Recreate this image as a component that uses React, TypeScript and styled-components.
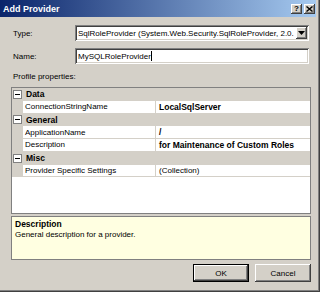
import styled, { createGlobalStyle } from 'styled-components';

const GlobalStyle = createGlobalStyle`
  html, body {
    margin: 0;
    padding: 0;
    background: #d4d0c8;
  }
  body {
    font-family: 'Liberation Sans', Arial, sans-serif;
    font-size: 8px;
    color: #000;
  }
`;

type GridRow =
  | { kind: 'category'; name: string }
  | { kind: 'prop'; name: string; value: string; bold?: boolean };

const rows: GridRow[] = [
  { kind: 'category', name: 'Data' },
  { kind: 'prop', name: 'ConnectionStringName', value: 'LocalSqlServer', bold: true },
  { kind: 'category', name: 'General' },
  { kind: 'prop', name: 'ApplicationName', value: '/', bold: true },
  { kind: 'prop', name: 'Description', value: 'for Maintenance of Custom Roles', bold: true },
  { kind: 'category', name: 'Misc' },
  { kind: 'prop', name: 'Provider Specific Settings', value: '(Collection)' },
];

export default function App(): JSX.Element {
  return (
    <>
      <GlobalStyle />
      <Window>
        <TitleBar>
          <TitleText>Add Provider</TitleText>
          <CaptionButtons>
            <CaptionButton>?</CaptionButton>
            <CaptionButton>
              <svg width="7" height="6" viewBox="0 0 7 6">
                <path d="M0.5 0.5 L6.5 5.5 M6.5 0.5 L0.5 5.5" stroke="#000" strokeWidth="1.4" />
              </svg>
            </CaptionButton>
          </CaptionButtons>
        </TitleBar>

        <Body>
          <Form>
            <Label>Type:</Label>
            <Sunken>
              <FieldText>SqlRoleProvider (System.Web.Security.SqlRoleProvider, 2.0.</FieldText>
              <DropButton>
                <svg width="7" height="4" viewBox="0 0 7 4">
                  <path d="M0 0 H7 L3.5 4 Z" fill="#000" />
                </svg>
              </DropButton>
            </Sunken>
            <Label>Name:</Label>
            <Sunken>
              <FieldText>
                MySQLRoleProvider<Caret />
              </FieldText>
            </Sunken>
          </Form>

          <SectionLabel>Profile properties:</SectionLabel>

          <PropertyGrid>
            {rows.map((row) =>
              row.kind === 'category' ? (
                <CategoryRow key={row.name}>
                  <Gutter>
                    <ExpandBox />
                  </Gutter>
                  <CategoryName>{row.name}</CategoryName>
                </CategoryRow>
              ) : (
                <PropRow key={row.name}>
                  <Gutter />
                  <PropName>{row.name}</PropName>
                  <PropValue $bold={row.bold}>{row.value}</PropValue>
                </PropRow>
              ),
            )}
          </PropertyGrid>

          <HelpPanel>
            <HelpTitle>Description</HelpTitle>
            <HelpText>General description for a provider.</HelpText>
          </HelpPanel>

          <ButtonRow>
            <PushButton $default>OK</PushButton>
            <PushButton>Cancel</PushButton>
          </ButtonRow>
        </Body>
      </Window>
    </>
  );
}

const Window = styled.div`
  width: 320px;
  height: 292px;
  box-sizing: border-box;
  display: flex;
  flex-direction: column;
  background: #d4d0c8;
  padding: 0 4px 4px 0;
  overflow: hidden;
  box-shadow: inset -1px -1px #404040, inset -2px -2px #808080;
`;

const TitleBar = styled.div`
  height: 17px;
  flex-shrink: 0;
  display: flex;
  align-items: center;
  padding: 0 1px 0 3px;
  background: linear-gradient(to right, #0a246a, #a6caf0);
  color: #fff;
`;

const TitleText = styled.div`
  flex: 1;
  font-weight: bold;
  font-size: 9px;
`;

const CaptionButtons = styled.div`
  display: flex;
  gap: 2px;
`;

const CaptionButton = styled.div`
  width: 11px;
  height: 10px;
  box-sizing: border-box;
  display: flex;
  align-items: center;
  justify-content: center;
  background: #d4d0c8;
  color: #000;
  font-weight: bold;
  font-size: 8px;
  box-shadow: inset -1px -1px #404040, inset 1px 1px #fff, inset -2px -2px #808080;
`;

const Body = styled.div`
  flex: 1;
  min-width: 0;
  display: flex;
  flex-direction: column;
  padding: 8px 5px 0 11px;
`;

const Form = styled.div`
  display: grid;
  grid-template-columns: 64px minmax(0, 1fr);
  row-gap: 7px;
  align-items: center;
  margin-right: 2px;
`;

const Label = styled.div`
  padding-left: 2px;
`;

const Sunken = styled.div`
  height: 16px;
  min-width: 0;
  box-sizing: border-box;
  display: flex;
  align-items: center;
  padding: 2px;
  background: #fff;
  box-shadow: inset 1px 1px #808080, inset -1px -1px #fff, inset 2px 2px #404040,
    inset -2px -2px #d4d0c8;
`;

const FieldText = styled.div`
  flex: 1;
  min-width: 0;
  display: flex;
  align-items: center;
  padding-left: 1px;
  overflow: hidden;
  white-space: nowrap;
`;

const Caret = styled.span`
  display: inline-block;
  width: 1px;
  height: 10px;
  background: #000;
`;

const DropButton = styled.div`
  width: 11px;
  height: 12px;
  flex-shrink: 0;
  box-sizing: border-box;
  display: flex;
  align-items: center;
  justify-content: center;
  background: #d4d0c8;
  box-shadow: inset -1px -1px #404040, inset 1px 1px #fff, inset -2px -2px #808080;
`;

const SectionLabel = styled.div`
  margin: 7px 0 5px 2px;
  line-height: 11px;
`;

const PropertyGrid = styled.div`
  height: 127px;
  flex-shrink: 0;
  box-sizing: border-box;
  display: flex;
  flex-direction: column;
  border: 1px solid #808080;
  background: #fff;
  overflow: hidden;
`;

const CategoryRow = styled.div`
  height: 12.75px;
  flex-shrink: 0;
  display: flex;
  align-items: center;
  background: #d4d0c8;
`;

const PropRow = styled.div`
  height: 12.75px;
  flex-shrink: 0;
  box-sizing: border-box;
  display: flex;
  align-items: stretch;
  border-bottom: 1px solid #d4d0c8;
`;

const Gutter = styled.div`
  width: 11px;
  align-self: stretch;
  flex-shrink: 0;
  display: flex;
  align-items: center;
  justify-content: center;
  background: #d4d0c8;
`;

const ExpandBox = styled.div`
  width: 9px;
  height: 9px;
  box-sizing: border-box;
  border: 1px solid #808080;
  background: #fff;
  position: relative;

  &::after {
    content: '';
    position: absolute;
    left: 1px;
    top: 3px;
    width: 5px;
    height: 1px;
    background: #000;
  }
`;

const CategoryName = styled.div`
  padding-left: 3px;
  font-weight: bold;
  font-size: 8.5px;
`;

const PropName = styled.div`
  width: 133px;
  flex-shrink: 0;
  display: flex;
  align-items: center;
  padding-left: 2px;
  box-sizing: border-box;
  border-right: 1px solid #d4d0c8;
  white-space: nowrap;
`;

const PropValue = styled.div<{ $bold?: boolean }>`
  flex: 1;
  min-width: 0;
  display: flex;
  align-items: center;
  padding-left: 3px;
  white-space: nowrap;
  overflow: hidden;
  font-weight: ${(p) => (p.$bold ? 'bold' : 'normal')};
  font-size: ${(p) => (p.$bold ? '8.5px' : '8px')};
`;

const HelpPanel = styled.div`
  margin-top: 2px;
  height: 44px;
  flex-shrink: 0;
  box-sizing: border-box;
  border: 1px solid #808080;
  background: #ffffe1;
  padding: 2px 3px;
  line-height: 10.5px;
`;

const HelpTitle = styled.div`
  font-weight: bold;
  font-size: 8.5px;
`;

const HelpText = styled.div``;

const ButtonRow = styled.div`
  margin-top: 4px;
  display: flex;
  justify-content: flex-end;
  gap: 6px;
`;

const PushButton = styled.div<{ $default?: boolean }>`
  width: 56px;
  height: 18px;
  box-sizing: border-box;
  display: flex;
  align-items: center;
  justify-content: center;
  background: #d4d0c8;
  border: ${(p) => (p.$default ? '1px solid #000' : 'none')};
  box-shadow: inset -1px -1px #404040, inset 1px 1px #fff, inset -2px -2px #808080;
`;
